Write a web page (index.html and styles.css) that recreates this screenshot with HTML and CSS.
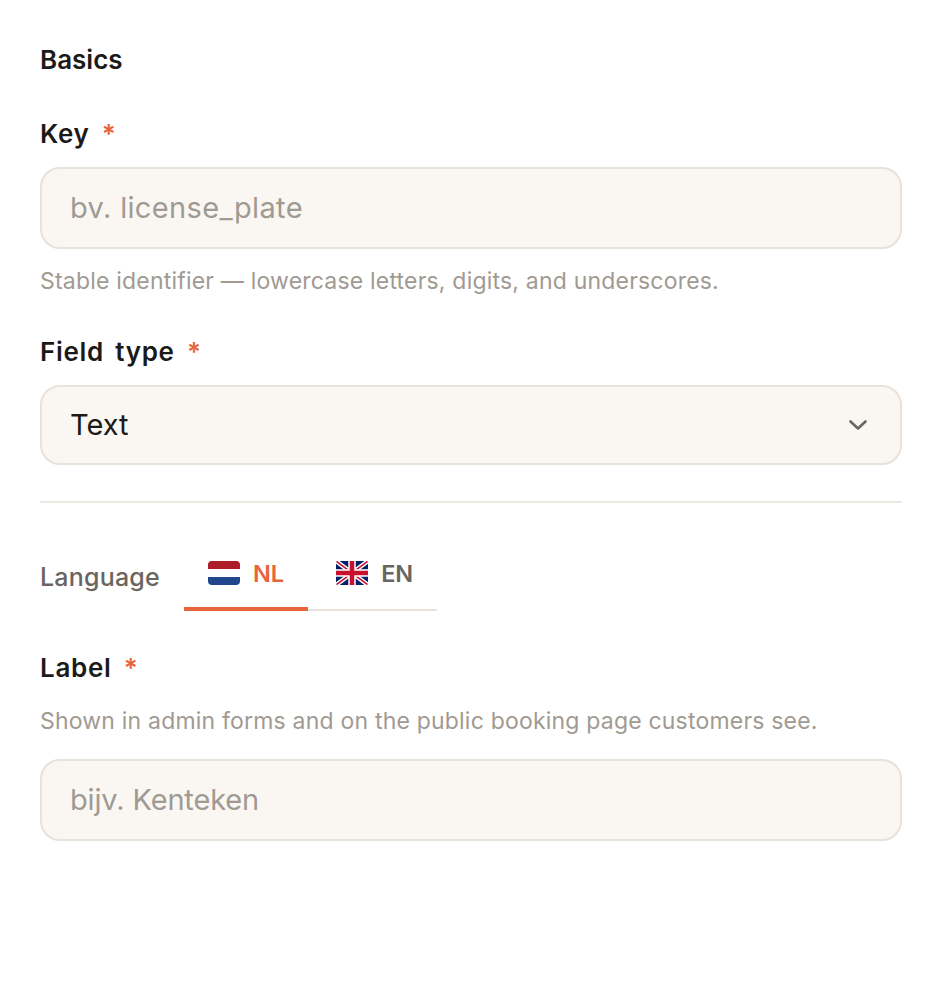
FILE: index.html
```html
<!DOCTYPE html>
<html lang="en">
<head>
<meta charset="UTF-8">
<meta name="viewport" content="width=device-width, initial-scale=1.0">
<title>Field settings</title>
<link rel="stylesheet" href="styles.css">
</head>
<body>
<form class="panel">
    <h2 class="section-title">Basics</h2>

    <div class="field field-key">
        <label class="field-label" for="key">Key <span class="required">*</span></label>
        <input class="text-input input-key" type="text" id="key" placeholder="bv. license_plate">
        <p class="hint hint-below">Stable identifier — lowercase letters, digits, and underscores.</p>
    </div>

    <div class="field field-type">
        <label class="field-label" for="type">Field type <span class="required">*</span></label>
        <div class="select-box" id="type">
            <span>Text</span>
            <svg class="chevron" width="20" height="20" viewBox="0 0 20 20" fill="none" stroke="#6b6560" stroke-width="2.6" stroke-linecap="round" stroke-linejoin="round"><path d="M2.5 6.5l7.5 7 7.5-7"/></svg>
        </div>
    </div>

    <hr class="divider">

    <div class="lang-row">
        <span class="lang-label">Language</span>
        <div class="tabs">
            <div class="tab tab-active">
                <svg class="flag" width="32" height="24" viewBox="0 0 32 24">
                    <clipPath id="nl-clip"><rect width="32" height="24" rx="4"/></clipPath>
                    <g clip-path="url(#nl-clip)">
                        <rect width="32" height="8" fill="#ae1c28"/>
                        <rect y="8" width="32" height="8" fill="#fff"/>
                        <rect y="16" width="32" height="8" fill="#21468b"/>
                    </g>
                </svg>
                NL
            </div>
            <div class="tab">
                <svg class="flag" width="32" height="24" viewBox="0 0 32 24">
                    <clipPath id="en-clip"><rect width="32" height="24" rx="2"/></clipPath>
                    <g clip-path="url(#en-clip)">
                        <rect width="32" height="24" fill="#012169"/>
                        <path d="M0 0l32 24M32 0L0 24" stroke="#fff" stroke-width="4.4"/>
                        <path d="M0 0l32 24M32 0L0 24" stroke="#c8102e" stroke-width="1.5"/>
                        <path d="M16 0v24M0 12h32" stroke="#fff" stroke-width="7.5"/>
                        <path d="M16 0v24M0 12h32" stroke="#c8102e" stroke-width="4.5"/>
                    </g>
                </svg>
                EN
            </div>
        </div>
    </div>

    <div class="field field-name">
        <label class="field-label" for="label">Label <span class="required">*</span></label>
        <p class="hint hint-above">Shown in admin forms and on the public booking page customers see.</p>
        <input class="text-input input-name" type="text" id="label" placeholder="bijv. Kenteken">
    </div>
</form>
</body>
</html>
```

FILE: styles.css
```css
* {
    box-sizing: border-box;
}
body {
    font-family: Inter, "Noto Sans", sans-serif;
    margin: 0;
    padding: 0;
    background-color: #fff;
    color: #1c1a18;
}
.panel {
    padding: 44px 40px 0;
}
.section-title {
    margin: 0;
    font-size: 26px;
    line-height: 32px;
    font-weight: 600;
}
.field-key {
    margin-top: 41px;
}
.field-type {
    margin-top: 39px;
}
.field-name {
    margin-top: 40px;
}
.field-label {
    display: block;
    font-size: 26px;
    line-height: 34px;
    font-weight: 600;
    letter-spacing: 0.7px;
    word-spacing: 4px;
}
.required {
    margin-left: 1px;
    color: #e8643a;
}
.text-input, .select-box {
    display: block;
    width: 100%;
    height: 82px;
    margin-top: 16px;
    padding: 0 28px 2px;
    background-color: #faf7f2;
    border: 2px solid #e8e2d9;
    border-radius: 20px;
    font-family: inherit;
    font-size: 29px;
    color: #1c1a18;
}
.text-input::placeholder {
    color: #a09a92;
    opacity: 1;
}
.input-key {
    letter-spacing: 0.35px;
}
.input-name {
    letter-spacing: -0.15px;
}
.select-box {
    display: flex;
    align-items: center;
    justify-content: space-between;
    height: 80px;
}
.chevron {
    margin-top: 2px;
    margin-right: 4px;
}
.hint {
    margin: 0;
    font-size: 23px;
    line-height: 30px;
    color: #a09a92;
    letter-spacing: 0.2px;
}
.hint-below {
    margin-top: 17px;
}
.hint-above {
    margin-top: 21px;
    margin-bottom: 23px;
}
.hint-above + .text-input {
    margin-top: 0;
}
.divider {
    height: 2px;
    margin: 36px 0 0;
    border: 0;
    background-color: #ece8e2;
}
.lang-row {
    display: flex;
    align-items: flex-end;
    margin-top: 42px;
}
.lang-label {
    width: 144px;
    font-size: 25px;
    line-height: 34px;
    font-weight: 500;
    color: #6b6560;
    letter-spacing: 0.2px;
    margin-bottom: 17px;
}
.tabs {
    display: flex;
    gap: 4px;
    border-bottom: 2px solid #e8e2d9;
}
.tab {
    display: flex;
    align-items: center;
    gap: 13px;
    height: 66px;
    padding: 0 24px 6px;
    margin-bottom: -2px;
    border-bottom: 4px solid transparent;
    font-size: 23.5px;
    font-weight: 600;
    color: #6b6560;
}
.tab-active {
    color: #e8643a;
    border-bottom-color: #e8643a;
}
.flag {
    flex: none;
}
```
